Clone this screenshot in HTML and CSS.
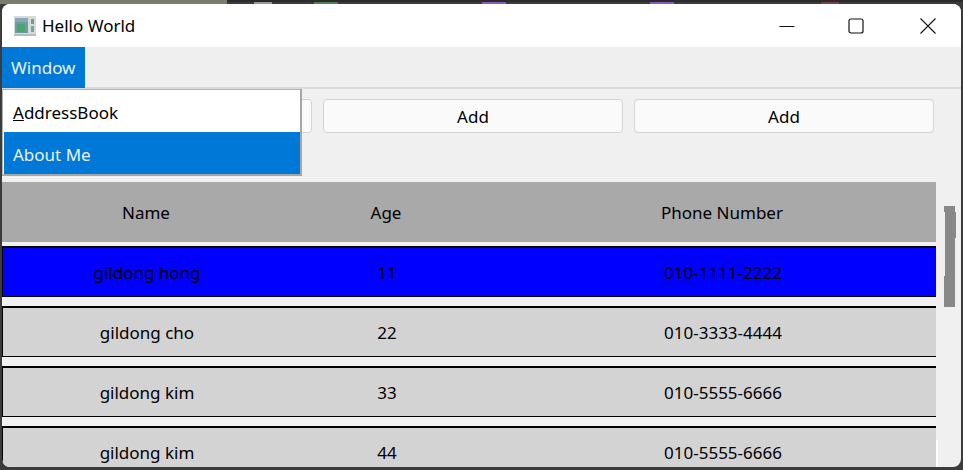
FILE: index.html
```html
<!DOCTYPE html>
<html>
<head>
    <title>Hello World</title>
    <link rel="stylesheet" href="styles.css">
</head>
<body>
    <div class="window">
        <div class="titlebar">
            <svg class="app-icon" width="22" height="20" viewBox="0 0 22 20">
                <rect x="0" y="0" width="22" height="20" fill="#d6dad8"/>
                <rect x="1" y="2" width="13" height="15" fill="#6b9f9c"/>
                <rect x="3" y="8" width="8" height="8" fill="#4ea374"/>
                <rect x="1" y="2" width="13" height="4" fill="#8aa6bd"/>
                <rect x="17" y="3" width="3" height="5" fill="#7f9896"/>
                <rect x="17" y="10" width="3" height="6" fill="#6dab92"/>
                <rect x="0" y="18" width="22" height="2" fill="#b4bdc2"/>
            </svg>
            <span class="app-title">Hello World</span>
            <div class="win-controls">
                <div class="win-btn">
                    <svg width="16" height="16" viewBox="0 0 16 16"><path d="M0.5 8.5H15.5" stroke="#111" fill="none"/></svg>
                </div>
                <div class="win-btn maximize">
                    <svg width="16" height="16" viewBox="0 0 16 16"><rect x="1" y="1" width="14" height="14" rx="2" stroke="#111" stroke-width="1.2" fill="none"/></svg>
                </div>
                <div class="win-btn close">
                    <svg width="16" height="16" viewBox="0 0 16 16"><path d="M0.5 0.5L15.5 15.5M15.5 0.5L0.5 15.5" stroke="#111" stroke-width="1.1" fill="none"/></svg>
                </div>
            </div>
        </div>

        <div class="menubar">
            <div class="menu-item active">Window</div>
        </div>

        <div class="dropdown">
            <div class="dropdown-item"><u>A</u>ddressBook</div>
            <div class="dropdown-item selected">About Me</div>
        </div>

        <div class="toolbar">
            <button class="add-btn">Add</button>
            <button class="add-btn">Add</button>
            <button class="add-btn">Add</button>
        </div>

        <div class="content">
            <div class="list">
                <div class="list-head">
                    <span>Name</span>
                    <span>Age</span>
                    <span>Phone Number</span>
                </div>
                <div class="list-row picked">
                    <span>gildong hong</span>
                    <span>11</span>
                    <span>010-1111-2222</span>
                </div>
                <div class="list-row">
                    <span>gildong cho</span>
                    <span>22</span>
                    <span>010-3333-4444</span>
                </div>
                <div class="list-row">
                    <span>gildong kim</span>
                    <span>33</span>
                    <span>010-5555-6666</span>
                </div>
                <div class="list-row">
                    <span>gildong kim</span>
                    <span>44</span>
                    <span>010-5555-6666</span>
                </div>
            </div>
            <div class="scroll-track">
                <div class="scroll-thumb"></div>
            </div>
        </div>
    </div>
</body>
</html>
```

FILE: styles.css
```css
html, body {
    height: 100%;
}

/* the desktop behind the window, only a few pixels of it show */
body {
    margin: 0;
    padding: 4px 2px 3px;
    box-sizing: border-box;
    overflow: hidden;
    font-family: "Noto Sans", "Open Sans", sans-serif;
    font-size: 17px;
    color: #000;
    background-color: #3b3b3b;
    background-image:
        linear-gradient(#8a5cc0, #8a5cc0),
        linear-gradient(#8a5cc0, #8a5cc0),
        linear-gradient(#7a4148, #7a4148),
        linear-gradient(#4f8058, #4f8058),
        linear-gradient(#999, #999),
        linear-gradient(#7a7c70, #7a7c70),
        linear-gradient(#2b2b2b, #2b2b2b);
    background-repeat: no-repeat;
    background-size: 24px 2px, 24px 2px, 18px 2px, 24px 2px, 18px 2px, 227px 4px, 100% 2px;
    background-position: 482px 2px, 650px 2px, 821px 2px, 314px 2px, 254px 2px, 0 0, 0 0;
}

.window {
    position: relative;
    height: 100%;
    display: flex;
    flex-direction: column;
    overflow: hidden;
    background-color: #f0f0f0;
    border-radius: 8px;
}

.titlebar {
    height: 43px;
    flex: none;
    display: flex;
    align-items: center;
    padding-left: 12px;
    background-color: #fff;
}

.app-icon {
    margin-right: 6px;
}

.win-controls {
    display: flex;
    margin-left: auto;
    margin-right: -1px;
    align-self: stretch;
}

.win-btn {
    width: 70px;
    box-sizing: border-box;
    display: flex;
    align-items: center;
    justify-content: center;
}

.win-btn.maximize {
    padding-right: 2px;
}

.win-btn.close {
    padding-left: 2px;
}

.menubar {
    height: 40px;
    flex: none;
    display: flex;
    background-color: #efefef;
    border-bottom: 2px solid #d9d9d9;
}

.menu-item {
    padding: 0 9px 0 9px;
    line-height: 41px;
    height: 41px;
    min-width: 65px;
    box-sizing: content-box;
}

.menu-item.active {
    background-color: #0078d7;
    color: #e8f3fc;
}

/* opened menu */
.dropdown {
    position: absolute;
    left: 0;
    top: 85px;
    width: 296px;
    padding-left: 1px;
    background-color: #fff;
    border: 1px solid #b4b4b4;
    border-right: 2px solid #a6a6a6;
    border-bottom: 2px solid #a6a6a6;
}

.dropdown-item {
    height: 42px;
    line-height: 46px;
    padding-left: 9px;
}

.dropdown-item.selected {
    background-color: #0078d7;
    color: #e8f3fc;
}

.toolbar {
    flex: none;
    display: flex;
    gap: 11px;
    padding: 10px 0 0 10px;
}

.add-btn {
    width: 300px;
    height: 34px;
    padding: 1px 0 0;
    font: inherit;
    color: #000;
    background-color: #fafafa;
    border: 1px solid #d4d4d4;
    border-radius: 4px;
}

.content {
    position: relative;
    flex: 1;
    min-height: 0;
    display: flex;
    margin-top: 49px;
}

/* thin repaint left at the bottom edge of the list */
.content::after {
    content: "";
    position: absolute;
    left: 934px;
    bottom: 0;
    width: 2px;
    height: 27px;
    background-color: #fff;
}

.list {
    width: 934px;
    flex: none;
    overflow: hidden;
}

.list-head,
.list-row {
    width: 960px;
    display: grid;
    grid-template-columns: 288px 192px 480px;
    align-items: center;
    text-align: center;
}

.list-head {
    height: 60px;
    padding-top: 1px;
    box-sizing: border-box;
    background-color: #a9a9a9;
    margin-bottom: 4px;
}

.list-row {
    box-sizing: border-box;
    height: 51px;
    padding-top: 1px;
    margin-bottom: 9px;
    background-color: #d3d3d3;
    border-top: 2px solid #000;
    border-bottom: 1px solid #000;
    border-left: 1px solid #000;
}

.list-row.picked {
    background-color: #0000ff;
}

.scroll-track {
    flex: 1;
    padding: 24px 0 0 8px;
}

.scroll-thumb {
    width: 12px;
    height: 101px;
    background-color: #888;
    clip-path: polygon(0 0, 11px 0, 11px 6px, 12px 6px, 12px 32px, 11px 32px, 11px 101px, 0 101px, 0 70px, 1px 70px, 1px 6px, 0 6px);
}
```
